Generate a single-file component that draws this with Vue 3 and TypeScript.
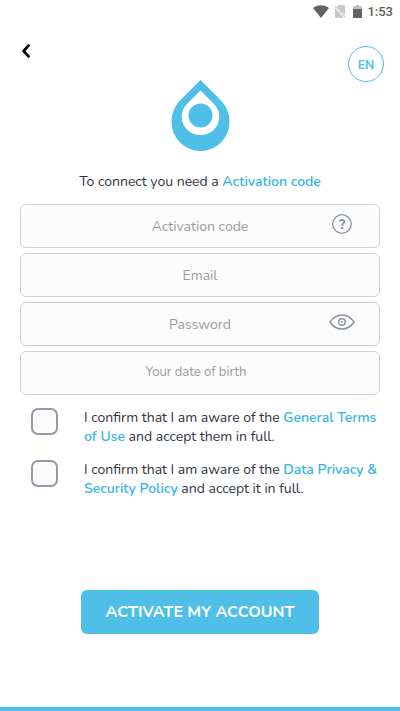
<script setup lang="ts">
import { computed, ref } from 'vue'

const code = ref('')
const email = ref('')
const password = ref('')
const birthDate = ref('')
const termsAccepted = ref(false)
const privacyAccepted = ref(false)
const passwordVisible = ref(false)

const passwordType = computed<string>(() => (passwordVisible.value ? 'text' : 'password'))
</script>

<template>
  <div class="screen">
    <div class="status">
      <svg class="wifi" viewBox="0 0 16 13" aria-hidden="true">
        <path d="M0 3C4.600-.6 11.400-.6 16 3L8 13Z" fill="#626262" />
      </svg>
      <svg class="sim" viewBox="0 0 12 13" aria-hidden="true">
        <path d="M4.500 0H10a1 1 0 0 1 1 1v9.200L2.800 1.900ZM1 3.400 10 12.700H2a1 1 0 0 1-1-1Z" fill="#c8c8c8" />
        <path d="M.6.900 11.500 12.400" stroke="#bcbcbc" stroke-width="1" />
      </svg>
      <svg class="battery" viewBox="0 0 9 13" aria-hidden="true">
        <path d="M3 0h3v1.300h3V5H0V1.300h3Z" fill="#bdbdbd" />
        <path d="M0 4h9v8.200a.8.8 0 0 1-.8.8H.8a.8.8 0 0 1-.8-.8Z" fill="#626262" />
      </svg>
      <span class="clock">1:53</span>
    </div>

    <header class="top">
      <button class="back" type="button" aria-label="Back">
        <svg viewBox="0 0 8 14" aria-hidden="true">
          <path d="M6.500 1.600 1.600 7l4.900 5.400" fill="none" stroke="#000" stroke-width="2.700" stroke-linecap="round" stroke-linejoin="round" />
        </svg>
      </button>
      <button class="lang" type="button">EN</button>
    </header>

    <svg class="logo" viewBox="0 0 59 71" aria-hidden="true">
      <path d="M29.500 0 49 19.500C55 25.500 58.500 33 58.500 42a29 29 0 0 1-58 0C.5 33 4 25.500 10 19.500Z" fill="#4fbfe8" />
      <path d="M29.500 10.500 42.300 23.300C46.200 27 48.300 31.500 48.300 36.500a18.800 18.800 0 0 1-37.600 0C10.700 31.500 12.800 27 16.700 23.300Z" fill="#fff" />
      <circle cx="29.500" cy="35.500" r="12" fill="#4fbfe8" />
    </svg>

    <p class="intro">To connect you need a <a href="#code">Activation code</a></p>

    <form class="form" @submit.prevent>
      <div class="fields">
        <div class="field">
          <input id="code" v-model="code" type="text" placeholder="Activation code" aria-label="Activation code" />
          <button class="adorn" type="button" aria-label="Help">
            <svg class="help" viewBox="0 0 20 20" aria-hidden="true">
              <circle cx="10" cy="10" r="9.300" fill="none" stroke="#8a93a1" stroke-width="1.300" />
              <path d="M7.800 7.600C8 5.300 12.300 5.200 12.300 7.700c0 1.800-2.200 1.900-2.200 4" fill="none" stroke="#8a93a1" stroke-width="1.800" />
              <circle cx="10.100" cy="14" r="1.200" fill="#8a93a1" />
            </svg>
          </button>
        </div>
        <div class="field">
          <input v-model="email" type="email" placeholder="Email" aria-label="Email" />
        </div>
        <div class="field">
          <input v-model="password" :type="passwordType" placeholder="Password" aria-label="Password" />
          <button class="adorn" type="button" aria-label="Show password" @click="passwordVisible = !passwordVisible">
            <svg class="eye" viewBox="0 0 26 16" aria-hidden="true">
              <path d="M1 8C4 3.500 8 .9 13 .9S22 3.500 25 8C22 12.500 18 15.100 13 15.100S4 12.500 1 8Z" fill="none" stroke="#8a93a1" stroke-width="1.500" stroke-linejoin="round" />
              <circle cx="13" cy="8" r="3.200" fill="none" stroke="#8a93a1" stroke-width="1.400" />
              <circle cx="13" cy="8" r="1" fill="#8a93a1" />
            </svg>
          </button>
        </div>
        <div class="field date">
          <input v-model="birthDate" type="text" placeholder="Your date of birth" aria-label="Your date of birth" />
        </div>
      </div>

      <div class="consents">
        <div class="consent">
          <input id="terms" v-model="termsAccepted" type="checkbox" />
          <label for="terms">I confirm that I am aware of the <a href="#terms">General Terms of Use</a> and accept them in full.</label>
        </div>
        <div class="consent">
          <input id="privacy" v-model="privacyAccepted" type="checkbox" />
          <label for="privacy">I confirm that I am aware of the <a href="#privacy">Data Privacy &amp; Security Policy</a> and accept it in full.</label>
        </div>
      </div>

      <button class="submit" type="submit">ACTIVATE MY ACCOUNT</button>
    </form>
  </div>
</template>

<style>
body {
  margin: 0;
  background: #fff;
}
</style>

<style scoped>
.screen {
  box-sizing: border-box;
  min-height: 100vh;
  display: flex;
  flex-direction: column;
  border-bottom: 4px solid #4fbfe8;
  background: #fff;
  color: #2e3440;
  font-family: Nunito, Lato, "Liberation Sans", sans-serif;
  font-size: 14px;
  line-height: 19px;
}

button {
  padding: 0;
  border: 0;
  background: none;
  font: inherit;
  cursor: pointer;
}

svg {
  display: block;
}

a {
  color: #35b4e4;
  font-weight: 600;
  text-decoration: none;
}

.status {
  display: flex;
  justify-content: flex-end;
  align-items: center;
  height: 22px;
  padding-right: 7px;
}

.wifi {
  width: 16px;
  height: 13px;
  margin-right: 5px;
}

.sim {
  width: 12px;
  height: 13px;
  margin-right: 7px;
}

.battery {
  width: 9px;
  height: 13px;
  margin-right: 5px;
}

.clock {
  color: #5c5c5c;
  font-family: Roboto, sans-serif;
  font-size: 13px;
  font-weight: 500;
}

.top {
  display: flex;
  justify-content: space-between;
  align-items: flex-start;
  padding: 20px 16px 0;
}

.back {
  padding: 2px 6px;
}

.back svg {
  width: 8px;
  height: 14px;
}

.lang {
  width: 36px;
  height: 36px;
  margin-top: 4px;
  border: 1px solid #4fbfe8;
  border-radius: 50%;
  color: #4fbfe8;
  font-family: Roboto, sans-serif;
  font-size: 13px;
  font-weight: 500;
}

.logo {
  width: 59px;
  height: 71px;
  margin: -2px auto 0;
}

.intro {
  margin: 21px 0 13px;
  text-align: center;
}

.form {
  flex: 1;
  display: flex;
  flex-direction: column;
  padding: 0 20px 73px;
}

.fields {
  display: grid;
  gap: 5px;
}

.field {
  position: relative;
}

.field input {
  display: block;
  box-sizing: border-box;
  width: 100%;
  height: 44px;
  padding: 0 48px;
  border: 1px solid #d2d2d2;
  border-radius: 6px;
  outline: none;
  background: #fcfcfc;
  color: #2e3440;
  font: inherit;
  text-align: center;
}

.field input::placeholder {
  color: #9b9b9b;
  opacity: 1;
}

.date input {
  padding: 0 56px 2px 48px;
  font-size: 13px;
}

.adorn {
  position: absolute;
  top: 0;
  right: 24px;
  display: flex;
  justify-content: center;
  align-items: center;
  width: 28px;
  height: 40px;
}

.help {
  width: 20px;
  height: 20px;
}

.eye {
  width: 26px;
  height: 16px;
}

.consents {
  display: grid;
  gap: 14px;
  padding: 13px 0 0 11px;
}

.consent {
  display: flex;
  align-items: flex-start;
  gap: 26px;
}

.consent label {
  flex: 1;
  margin-right: -6px;
}

.consent input {
  flex: none;
  appearance: none;
  width: 27px;
  height: 27px;
  margin: 0;
  border: 2px solid #939ba7;
  border-radius: 7px;
  background: #fcfcfc;
}

.consent input:checked {
  background: #4fbfe8;
}

.submit {
  align-self: center;
  height: 44px;
  margin-top: auto;
  padding: 0 25px;
  border-radius: 6px;
  background: #4fbfe8;
  color: #fff;
  font-size: 16px;
  font-weight: 700;
}
</style>
